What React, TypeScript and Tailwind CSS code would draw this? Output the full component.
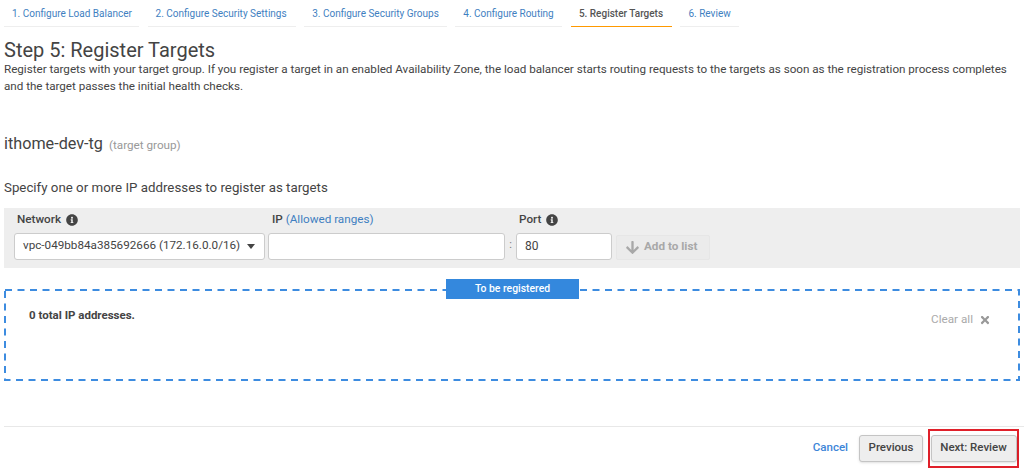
import { FaArrowDown, FaInfoCircle, FaTimes } from "react-icons/fa";

const steps = [
  { label: "1. Configure Load Balancer", width: "w-[135px]" },
  { label: "2. Configure Security Settings", width: "w-[148px]" },
  { label: "3. Configure Security Groups", width: "w-[142.5px]" },
  { label: "4. Configure Routing", width: "w-[107px]" },
  { label: "5. Register Targets", width: "w-[101px]", active: true },
  { label: "6. Review", width: "w-[59px]" },
];

export default function App() {
  return (
    <div className="w-[1024px] h-[474px] overflow-hidden bg-white pl-1 font-['Roboto',sans-serif] text-[#444]">
      <div className="flex gap-[8.6px] h-[27px]">
        {steps.map((s) => (
          <div
            key={s.label}
            className={`${s.width} shrink-0 pl-2 pt-[7px] text-[10px] leading-[14px] whitespace-nowrap border-b ${
              s.active ? "border-[#f90] font-medium text-[#555]" : "border-[#eee] text-[#3f7fc1]"
            }`}
          >
            {s.label}
          </div>
        ))}
      </div>

      <h1 className="mt-[12px] text-[20px] leading-[23px] text-[#444]">Step 5: Register Targets</h1>
      <p className="-mt-[1px] w-[1016px] text-[11.66px] tracking-[-0.018px] leading-[17px] text-[#444]">
        Register targets with your target group. If you register a target in an enabled Availability Zone, the load
        balancer starts routing requests to the targets as soon as the registration process completes and the target
        passes the initial health checks.
      </p>

      <div className="mt-[39px] flex items-baseline gap-[6px]">
        <span className="text-[16.2px] leading-[20px]">ithome-dev-tg</span>
        <span className="text-[11.7px] text-[#999]">(target group)</span>
      </div>

      <p className="mt-[24px] text-[13.3px] leading-[18px]">Specify one or more IP addresses to register as targets</p>

      <div className="mt-[11px] w-[1016px] h-[60px] bg-[#eee] pl-[10px] pt-[2px]">
        <div className="flex h-[20px] items-center text-[11.7px]">
          <div className="w-[255px] pl-[3px] flex items-center gap-[5px] font-medium">
            Network <FaInfoCircle size={12} />
          </div>
          <div className="w-[247px] pl-[3px]">
            <span className="font-medium">IP</span> <span className="text-[#3f7fc1]">(Allowed ranges)</span>
          </div>
          <div className="pl-[3px] flex items-center gap-[5px] font-medium">
            Port <FaInfoCircle size={12} />
          </div>
        </div>
        <div className="mt-[3px] flex items-end">
          <div className="w-[251px] h-[27px] flex items-center justify-between pl-[8px] pr-[9px] bg-white border border-[#ccc] rounded-[3px] text-[11.7px] whitespace-nowrap">
            <span>vpc-049bb84a385692666 (172.16.0.0/16)</span>
            <span className="w-0 h-0 border-x-[4.5px] border-x-transparent border-t-[5px] border-t-[#444]" />
          </div>
          <div className="ml-[3px] w-[237px] h-[27px] bg-white border border-[#ccc] rounded-[3px]" />
          <span className="w-[11px] h-[27px] leading-[24px] text-center text-[11px] text-[#777]">:</span>
          <div className="w-[96px] h-[27px] flex items-center pl-[8px] bg-white border border-[#ccc] rounded-[3px] text-[12px]">
            80
          </div>
          <div className="ml-[4px] w-[94px] h-[25px] flex items-center pl-[8px] gap-[4px] bg-[#ebebeb] border border-[#e6e6e6] rounded-[2px] text-[11.7px] font-bold text-[#a8a8a8]">
            <FaArrowDown size={15} />
            Add to list
          </div>
        </div>
      </div>

      <div className="relative mt-[21px] w-[1016px] h-[92px] pl-[25px] pr-[29px] pt-[18px] flex justify-between">
        <svg className="absolute inset-0 w-full h-full" fill="none">
          <rect x="1" y="1" width="1014" height="90" stroke="#3d8ce0" strokeWidth="2" strokeDasharray="7 5.5" />
        </svg>
        <div className="absolute left-[442px] top-[-10px] w-[133px] h-[20px] bg-[#3488dd] text-white text-[10.4px] leading-[20px] font-medium text-center">
          To be registered
        </div>
        <span className="text-[11.5px] leading-[16px] font-bold">0 total IP addresses.</span>
        <span className="mt-[5px] flex h-[16px] items-center gap-[6px] text-[11.7px] text-[#aaa]">
          Clear all <FaTimes size={12} className="text-[#999]" />
        </span>
      </div>

      <div className="mt-[45px] border-t border-[#e8e8e8] h-[44px] flex items-center justify-end pr-[5px]">
        <a className="text-[11.5px] font-medium text-[#3d86d8] mr-[11px]">Cancel</a>
        <button className="w-[64px] h-[27px] bg-[#eee] border border-[#c4c4c4] rounded-[3px] text-[11.5px] font-medium text-[#444] shadow-sm">
          Previous
        </button>
        <div className="ml-[5px] w-[91px] h-[39px] flex items-center justify-center border-2 border-[#e0202a]">
          <button className="w-[86px] h-[27px] bg-[#eee] border border-[#c4c4c4] rounded-[3px] text-[11.5px] font-medium text-[#444] shadow-sm">
            Next: Review
          </button>
        </div>
      </div>
    </div>
  );
}
